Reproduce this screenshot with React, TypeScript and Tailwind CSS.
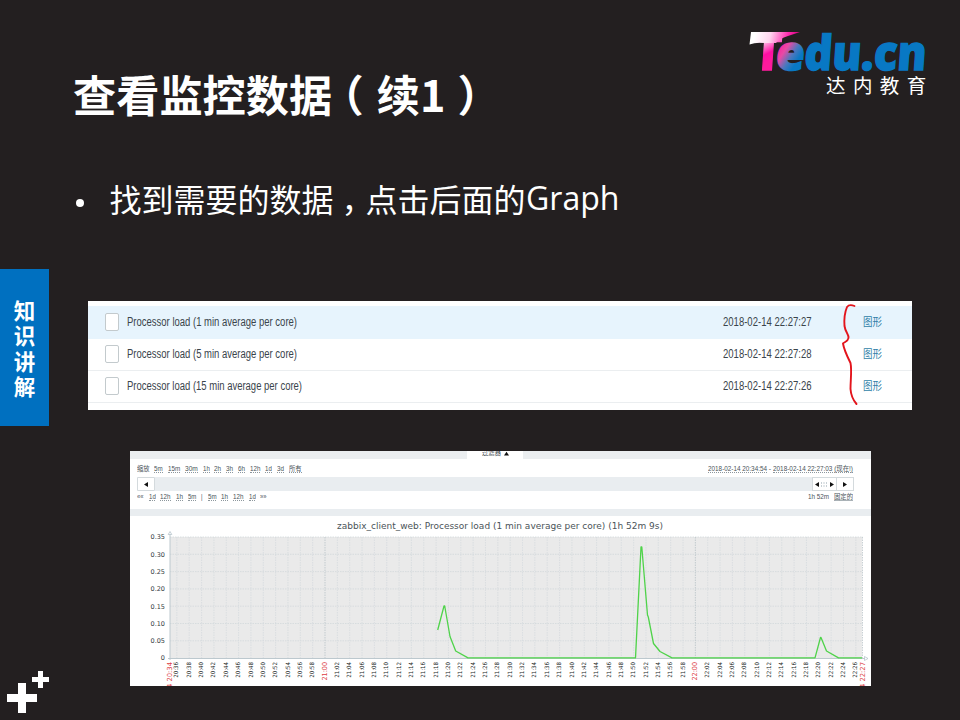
import { useLayoutEffect, useRef, useState, type ReactNode } from "react";

/** Text squeezed or stretched horizontally so that it is exactly `w` pixels wide. */
function Fit({ w, className = "", children }: { w: number; className?: string; children: ReactNode }) {
  const ref = useRef<HTMLSpanElement>(null);
  const [scale, setScale] = useState(1);
  useLayoutEffect(() => {
    if (!ref.current) return;
    ref.current.style.transform = "none";
    const natural = ref.current.getBoundingClientRect().width;
    ref.current.style.transform = `scaleX(${w / natural})`;
    setScale(w / natural);
  }, [w]);
  return (
    <span className={`block shrink-0 whitespace-nowrap ${className}`} style={{ width: w }}>
      <span ref={ref} className="inline-block origin-left" style={{ transform: `scaleX(${scale})` }}>
        {children}
      </span>
    </span>
  );
}

function Logo() {
  return (
    <svg width="200" height="80" viewBox="740 24 200 80" className="block overflow-visible">
      <defs>
        <linearGradient id="t" gradientUnits="userSpaceOnUse" x1="758" y1="-38" x2="772" y2="-10">
          <stop offset="0" stopColor="#fff" />
          <stop offset="0.3" stopColor="#ffd5ef" />
          <stop offset="0.75" stopColor="#ff0ea4" />
          <stop offset="1" stopColor="#ff1a9c" />
        </linearGradient>
        <linearGradient id="sw" gradientUnits="userSpaceOnUse" x1="756" y1="30" x2="798" y2="40">
          <stop offset="0" stopColor="#fff" />
          <stop offset="0.35" stopColor="#ffd5ef" />
          <stop offset="0.75" stopColor="#ff2aae" />
          <stop offset="1" stopColor="#d5007d" />
        </linearGradient>
        <linearGradient id="e" gradientUnits="userSpaceOnUse" x1="775" y1="-22" x2="797" y2="-9">
          <stop offset="0" stopColor="#ff1b9b" />
          <stop offset="0.35" stopColor="#e84aa5" />
          <stop offset="0.7" stopColor="#4a78bd" />
          <stop offset="1" stopColor="#0878c4" />
        </linearGradient>
      </defs>
      <g
        fontFamily="'Open Sans','Noto Sans',sans-serif"
        fontWeight="800"
        fontSize="48"
        strokeWidth="1.400"
        transform="translate(0 69.500) skewX(-4)"
      >
        <text x="753.500" y="0" fontSize="51" fill="url(#t)" stroke="url(#t)" textLength="27" lengthAdjust="spacingAndGlyphs">T</text>
        <text x="775" y="0" fill="url(#e)" stroke="url(#e)" textLength="29" lengthAdjust="spacingAndGlyphs">e</text>
        <text x="803.500" y="0" fill="#0878c4" stroke="#0878c4" textLength="122" lengthAdjust="spacingAndGlyphs">du.cn</text>
      </g>
      <path d="M751 32H800L788 36Q779 39 776 43L764 43Q756 42 749.500 44.500Z" fill="url(#sw)" />
      <text
        x="826"
        y="92.500"
        fill="#fff"
        fontFamily="'Noto Sans CJK SC',sans-serif"
        fontSize="19.500"
        letterSpacing="7.400"
      >
        达内教育
      </text>
    </svg>
  );
}

function Pluses() {
  return (
    <svg width="49" height="52" viewBox="0 668 49 52" className="block">
      <path d="M7 694H18V683H26V694H37V702H26V713H18V702H7Z" fill="#fff" />
      <path d="M32 677H38V671H43V677H49V682H43V688H38V682H32Z" fill="#fff" />
    </svg>
  );
}

const rows = [
  { name: "Processor load (1 min average per core)", w: 170, time: "2018-02-14 22:27:27", bg: "h-[33px] bg-[#e7f4fd]" },
  { name: "Processor load (5 min average per core)", w: 170, time: "2018-02-14 22:27:28", bg: "h-[32px] border-b border-[#ebeef0] bg-white" },
  { name: "Processor load (15 min average per core)", w: 175, time: "2018-02-14 22:27:26", bg: "h-[32px] border-b border-[#ebeef0] bg-white" },
];

function DataTable() {
  return (
    <section className="relative ml-[39px] h-[109px] w-[824px] bg-white pt-[5px] font-['Liberation_Sans','Noto_Sans_CJK_SC',sans-serif] text-[12.500px] text-[#3a444b]">
      {rows.map((r) => (
        <div key={r.name} className={`flex items-center pb-[2px] ${r.bg}`}>
          <span className="ml-[17px] h-[18px] w-[14px] shrink-0 rounded-[2px] border border-[#c3cacd] bg-white" />
          <Fit w={r.w} className="mt-[2px] ml-2">{r.name}</Fit>
          <span className="flex-1" />
          <Fit w={88.500} className="mt-[2px]">{r.time}</Fit>
          <Fit w={19} className="mt-px mr-[30px] ml-[52px] text-[11px] text-[#2f7fa8]">图形</Fit>
        </div>
      ))}
      <svg className="absolute top-0 left-[750px]" width="24" height="109" viewBox="838 301 24 109">
        <path
          d="M854.500 306C851 304.500 848.500 305 847 307C844.500 313 844 319 844.500 326C845.500 333 849 334 848.500 338C848 341.500 844.500 342 843 343.500C844 350 847.500 357 850.500 363C852 370 850.500 380 850.500 389C851 396 853 400 856.500 404"
          fill="none"
          stroke="#e3141c"
          strokeWidth="1.900"
          strokeLinecap="round"
          strokeLinejoin="round"
        />
      </svg>
    </section>
  );
}

const zoomLinks: [string, number][] = [
  ["5m", 8.6], ["15m", 12.2], ["30m", 12.8], ["1h", 6.8], ["2h", 7], ["3h", 7], ["6h", 7], ["12h", 10.4], ["1d", 6.8], ["3d", 7], ["所有", 12.6],
];
const backLinks: [string, number][] = [["1d", 6.8], ["12h", 10.4], ["1h", 7], ["5m", 8.4]];
const forwardLinks: [string, number][] = [["5m", 8.6], ["1h", 7], ["12h", 10.4], ["1d", 6.8]];

function Link({ t, w }: { t: string; w: number }) {
  return <Fit w={w} className="h-[9px] border-b border-dotted border-[#8d979d]">{t}</Fit>;
}

function TimeControls() {
  return (
    <>
      <div className="flex h-2 justify-center overflow-hidden bg-[#ebeef0]">
        <div className="mr-[11px] flex w-14 justify-center gap-[3px] bg-white text-[7px] leading-[8px]">
          <Fit w={19} className="-mt-[2px]">过滤器</Fit>
          <svg width="5" height="8" viewBox="0 0 5 8"><path d="M0 4.500L2.500 .8L5 4.500Z" fill="#111" /></svg>
        </div>
      </div>
      <div className="flex h-[18px] items-center gap-[4.900px] pr-[18px] pl-[7px] text-[7px] leading-[9px]">
        <Fit w={12.600} className="h-[9px]">缩放</Fit>
        {zoomLinks.map(([t, w]) => <Link key={t} t={t} w={w} />)}
        <span className="flex-1" />
        <div className="flex gap-[2px]">
          <Link t="2018-02-14 20:34:54" w={59} />
          <span>-</span>
          <Link t="2018-02-14 22:27:03 (现在!)" w={80} />
        </div>
      </div>
      <div className="mr-[17px] ml-[7px] flex h-[14px] bg-[#e9edf0]">
        <div className="flex w-[18px] items-center justify-center rounded-[1px] border border-[#d4dadd] bg-white">
          <svg width="4" height="5" viewBox="0 0 4 5"><path d="M4 0V5L0 2.500Z" fill="#111" /></svg>
        </div>
        <span className="flex-1" />
        <div className="flex w-[25px] items-center justify-center border border-[#d4dadd] bg-white">
          <svg width="19" height="5" viewBox="0 0 19 5">
            <path d="M4 0V5L0 2.500ZM15 0V5L19 2.500Z" fill="#111" />
            <path d="M6 1H13M6 4H13" stroke="#8fa0aa" strokeDasharray="1 1.500" />
          </svg>
        </div>
        <div className="-ml-px flex w-[18px] items-center justify-center border border-[#d4dadd] bg-white">
          <svg width="4" height="5" viewBox="0 0 4 5"><path d="M0 0V5L4 2.500Z" fill="#111" /></svg>
        </div>
      </div>
      <div className="flex h-[18px] items-start gap-[5px] pt-[1px] pr-[18px] pl-[7px] text-[7px] leading-[9px]">
        <Fit w={6.500}>««</Fit>
        {backLinks.map(([t, w]) => <Link key={t} t={t} w={w} />)}
        <Fit w={1.500}>|</Fit>
        {forwardLinks.map(([t, w]) => <Link key={t} t={t} w={w} />)}
        <Fit w={6.500}>»»</Fit>
        <span className="flex-1" />
        <Fit w={21}>1h 52m</Fit>
        <Fit w={19} className="h-[9px] border-b border-[#aab2b7]">固定的</Fit>
      </div>
      <div className="h-[7px] bg-[#e9edf0]" />
    </>
  );
}

const yLabels = ["0.35", "0.30", "0.25", "0.20", "0.15", "0.10", "0.05", "0"];

const ticks = Array.from({ length: 56 }, (_, i) => {
  const minutes = 20 * 60 + 36 + i * 2;
  const label = `${Math.floor(minutes / 60)}:${String(minutes % 60).padStart(2, "0")}`;
  return { label, x: 325 + (i - 12) * 12.345, hour: minutes % 60 === 0 };
});

const series =
  "437.7,630 444,606 444.700,606 450,636.500 455.700,651 468,657.900 635.500,657.900 641,547 641.800,547 647.500,615 648.300,617 653.500,643.500 660,651.500 672,657.900 815,657.900 820.500,637.500 821,637.500 826.500,651 838.500,657.900 862,657.900";

function Graph() {
  return (
    <svg width="741" height="170" viewBox="130 516 741 170" className="block shrink-0" fontFamily="'DejaVu Sans',sans-serif">
      <rect x="170" y="537" width="692" height="121" fill="#eaeaea" />
      <text x="337" y="529.300" fontSize="8.500" fill="#4b5459" textLength="326" lengthAdjust="spacingAndGlyphs">
        zabbix_client_web: Processor load (1 min average per core) (1h 52m 9s)
      </text>
      {yLabels.map((l, i) => (
        <g key={l}>
          {i < 7 && (
            <line x1="170" x2="863" y1={537 + i * 17.3} y2={537 + i * 17.3} stroke="#d2d8db" strokeWidth="0.8" strokeDasharray="1.500 1" />
          )}
          <text x="165" y={539.3 + i * 17.3} fontSize="6.500" textAnchor="end" fill="#333d42">{l}</text>
        </g>
      ))}
      {ticks.map((t) => (
        <g key={t.label}>
          <line x1={t.x} x2={t.x} y1="537" y2="658" stroke={t.hour ? "#b9c3c8" : "#d5dbde"} strokeWidth="0.8" strokeDasharray="1.500 1" />
          <text
            transform={`translate(${t.x + (t.hour ? 2 : 1.6)} 662) rotate(-90)`}
            textAnchor="end"
            fontSize={t.hour ? 6.8 : 5.9}
            textLength={t.hour ? 18.5 : 15.8}
            lengthAdjust="spacingAndGlyphs"
            fill={t.hour ? "#dc3c44" : "#151c20"}
          >
            {t.label}
          </text>
        </g>
      ))}
      <g fontSize="6.800" fill="#dc3c44" textAnchor="end">
        <text transform="translate(172 662) rotate(-90)">02-14 20:34</text>
        <text transform="translate(864.500 662) rotate(-90)">02-14 22:27</text>
      </g>
      <path d="M862.500 537V658" stroke="#c9d0d4" strokeDasharray="1.500 1" />
      <path d="M170 534V660M168 658.500H865" stroke="#bcc8ce" fill="none" />
      <path d="M168.200 534.500L170 531.500L171.800 534.500ZM864.500 656.500L868 658.500L864.500 660.500Z" stroke="#aebdc5" strokeWidth="0.7" fill="#fff" />
      <polyline points={series} fill="none" stroke="#4fd34a" strokeWidth="1.300" strokeLinejoin="round" />
    </svg>
  );
}

export default function App() {
  return (
    <div className="flex h-[720px] w-[960px] overflow-hidden bg-[#231f20] font-['Noto_Sans_CJK_SC',sans-serif] text-white">
      <aside className="flex w-[49px] shrink-0 flex-col justify-between pt-[269px]">
        <div className="flex h-[157px] flex-col items-center justify-center bg-[#0070c0] text-[21.500px] leading-[25.500px] font-bold">
          {["知", "识", "讲", "解"].map((c) => <span key={c}>{c}</span>)}
        </div>
        <Pluses />
      </aside>
      <main className="flex flex-1 flex-col">
        <header className="flex h-[150px] items-start justify-between pt-6 pr-5 pl-6">
          <h1 className="mt-[39px] text-[43.200px] leading-[60px] font-bold whitespace-nowrap">
            查看监控数据
            <span className="mr-[13px] ml-[10px] [font-feature-settings:'halt']">（</span>
            续1
            <span className="ml-[12px] [font-feature-settings:'halt']">）</span>
          </h1>
          <Logo />
        </header>
        <div className="flex h-[151px] items-start pt-[24px] pl-[26.500px]">
          <span className="mt-[25px] size-[8px] shrink-0 rounded-full bg-white" />
          <p className="ml-[26px] flex text-[32px] leading-[48px] whitespace-nowrap">
            <span>找到需要的数据</span>
            <span className="mr-[8px] ml-[8px] w-[16px] [font-feature-settings:'halt']">，</span>
            <span>点击后面的</span>
            <Fit w={93.500} className="font-['Open_Sans','Noto_Sans',sans-serif]">Graph</Fit>
          </p>
        </div>
        <DataTable />
        <section className="mt-[41px] ml-[81px] h-[235px] w-[741px] overflow-hidden bg-white font-['Liberation_Sans','Noto_Sans_CJK_SC',sans-serif] text-[#4a5359]">
          <TimeControls />
          <Graph />
        </section>
      </main>
    </div>
  );
}
